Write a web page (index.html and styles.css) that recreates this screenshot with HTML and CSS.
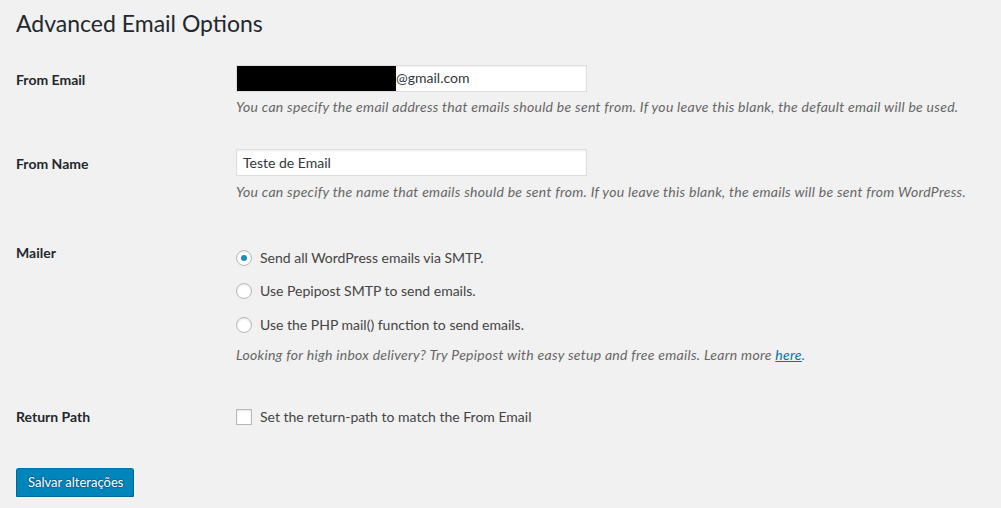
FILE: index.html
```html
<!DOCTYPE html>
<html lang="pt-BR">
<head>
<meta charset="utf-8">
<title>Advanced Email Options</title>
<link rel="stylesheet" href="styles.css">
</head>
<body>
<div class="wrap">
  <h1 class="title">Advanced Email Options</h1>
  <table class="form-table">
    <tr class="row row-email">
      <th>From Email</th>
      <td>
        <div class="field field-redacted"><span class="redact"></span><span class="value">@gmail.com</span></div>
        <p class="description">You can specify the email address that emails should be sent from. If you leave this blank, the default email will be used.</p>
      </td>
    </tr>
    <tr class="row row-name">
      <th>From Name</th>
      <td>
        <div class="field"><span class="value">Teste de Email</span></div>
        <p class="description">You can specify the name that emails should be sent from. If you leave this blank, the emails will be sent from WordPress.</p>
      </td>
    </tr>
    <tr class="row row-mailer">
      <th>Mailer</th>
      <td>
        <div class="options">
          <label class="option"><span class="radio checked"></span>Send all WordPress emails via SMTP.</label>
          <label class="option"><span class="radio"></span>Use Pepipost SMTP to send emails.</label>
          <label class="option"><span class="radio"></span>Use the PHP mail() function to send emails.</label>
        </div>
        <p class="description">Looking for high inbox delivery? Try Pepipost with easy setup and free emails. Learn more <a href="#">here</a>.</p>
      </td>
    </tr>
    <tr class="row row-return">
      <th>Return Path</th>
      <td>
        <label class="option option-check"><span class="checkbox"></span>Set the return-path to match the From Email</label>
      </td>
    </tr>
  </table>
  <div class="submit">
    <button class="button-primary" type="button">Salvar alterações</button>
  </div>
</div>
</body>
</html>
```

FILE: styles.css
```css
html, body {
  margin: 0;
  padding: 0;
}
body {
  background: #f1f1f1;
  color: #444;
  font-family: Lato, "Liberation Sans", sans-serif;
  font-size: 13px;
}
.wrap {
  padding: 0 16px;
}
.title {
  margin: 0;
  padding: 9px 0 4px;
  font-size: 23px;
  font-weight: 400;
  line-height: 1.3;
  color: #23282d;
}
.form-table {
  margin-top: 8px;
  border-collapse: collapse;
  border-spacing: 0;
}
.form-table th {
  width: 200px;
  padding: 20px 10px 20px 0;
  text-align: left;
  vertical-align: top;
  font-size: 14px;
  font-weight: 700;
  line-height: 1.3;
  color: #23282d;
}
.form-table td {
  padding: 14px 10px 15px;
  vertical-align: top;
  font-size: 14px;
  line-height: 1.3;
}
.field {
  box-sizing: border-box;
  width: 351px;
  height: 27px;
  display: flex;
  align-items: center;
  padding: 0 6px;
  background: #fff;
  border: 1px solid #ddd;
  box-shadow: inset 0 1px 2px rgba(0, 0, 0, 0.07);
  color: #32373c;
  font-size: 14px;
}
.field-redacted {
  padding-left: 0;
}
.redact {
  width: 159px;
  height: 25px;
  background: #000;
}
.description {
  margin: 5px 0 4px;
  font-size: 14px;
  font-style: italic;
  letter-spacing: 0.28px;
  line-height: 19.5px;
  color: #666;
}
.row-name .description {
  margin: 6px 0 7px;
}
.row-mailer .description {
  margin: 4px 0 8px;
}
.description a {
  color: #0073aa;
  text-decoration: underline;
}
.options {
  display: flex;
  flex-direction: column;
  padding-top: 3px;
}
.option {
  display: flex;
  align-items: center;
  height: 33.5px;
  color: #444;
}
.option-check {
  height: 31px;
}
.radio,
.checkbox {
  box-sizing: border-box;
  width: 16px;
  height: 16px;
  margin-right: 8px;
  background: #fff;
  border: 1px solid #b4b9be;
  box-shadow: inset 0 1px 2px rgba(0, 0, 0, 0.1);
  display: flex;
  align-items: center;
  justify-content: center;
  flex: none;
}
.radio {
  border-radius: 50%;
}
.radio.checked::before {
  content: "";
  width: 6px;
  height: 6px;
  border-radius: 50%;
  background: #1e8cbe;
}
.submit {
  margin-top: 20px;
}
.button-primary {
  height: 29px;
  padding: 0 10px 1px 11px;
  background: #0085ba;
  border: 1px solid #0073aa;
  border-color: #0073aa #006799 #006799;
  border-radius: 3px;
  box-shadow: 0 1px 0 #006799;
  color: #fff;
  font-family: Lato, "Liberation Sans", sans-serif;
  font-size: 13px;
  line-height: 26px;
  text-shadow: 0 -1px 1px #006799, 1px 0 1px #006799, 0 1px 1px #006799, -1px 0 1px #006799;
  cursor: pointer;
}
```
